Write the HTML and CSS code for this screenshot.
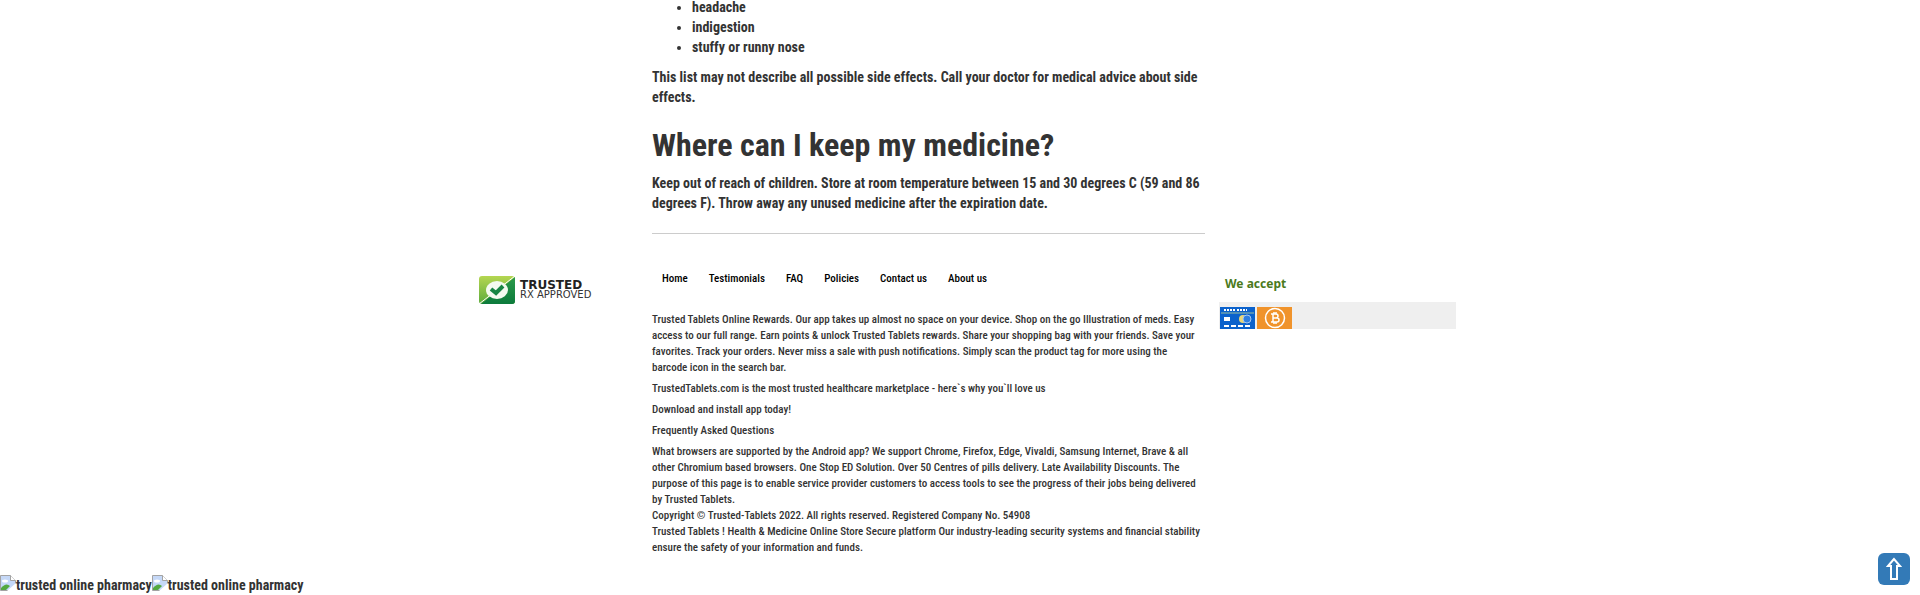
FILE: index.html
```html
<!DOCTYPE html>
<html lang="en">
<head>
  <meta charset="UTF-8">
  <meta name="viewport" content="width=device-width, initial-scale=1.0">
  <title>Trusted Tablets</title>
  <link rel="stylesheet" href="styles.css">
</head>
<body>
  <div class="container">
    <main class="content">
      <ul class="effects">
        <li>headache</li>
        <li>indigestion</li>
        <li>stuffy or runny nose</li>
      </ul>
      <p>This list may not describe all possible side effects. Call your doctor for medical advice about side effects.</p>
      <h1>Where can I keep my medicine?</h1>
      <p>Keep out of reach of children. Store at room temperature between 15 and 30 degrees C (59 and 86 degrees F). Throw away any unused medicine after the expiration date.</p>
      <hr>
    </main>
  </div>

  <footer class="container footer">
    <div class="logo">
      <svg class="logo-mark" width="36" height="28" viewBox="0 0 36 28" aria-hidden="true">
        <defs>
          <linearGradient id="lime" x1="0" y1="0" x2="0" y2="1">
            <stop offset="0" stop-color="#b5d651"/>
            <stop offset="1" stop-color="#5cab3c"/>
          </linearGradient>
          <linearGradient id="green" x1="0" y1="0" x2="0" y2="1">
            <stop offset="0" stop-color="#2c9a4a"/>
            <stop offset="1" stop-color="#0c7a3c"/>
          </linearGradient>
        </defs>
        <rect width="36" height="28" rx="3" fill="url(#lime)"/>
        <path d="M36 1V25a3 3 0 0 1-3 3H2z" fill="url(#green)"/>
        <path d="M36 0L0 28" stroke="#fff" stroke-width="1"/>
        <ellipse cx="18" cy="14" rx="11" ry="9" fill="#f4faf0"/>
        <path d="M12 13l5 4 7-7" fill="none" stroke="#178544" stroke-width="4"/>
      </svg>
      <div class="logo-text">
        <strong>TRUSTED</strong>
        <span>RX APPROVED</span>
      </div>
    </div>

    <div class="footer-main">
      <nav class="menu">
        <a href="#">Home</a>
        <a href="#">Testimonials</a>
        <a href="#">FAQ</a>
        <a href="#">Policies</a>
        <a href="#">Contact us</a>
        <a href="#">About us</a>
      </nav>
      <div class="about">
        <p>Trusted Tablets Online Rewards. Our app takes up almost no space on your device. Shop on the go Illustration of meds. Easy access to our full range. Earn points &amp; unlock Trusted Tablets rewards. Share your shopping bag with your friends. Save your favorites. Track your orders. Never miss a sale with push notifications. Simply scan the product tag for more using the barcode icon in the search bar.</p>
        <p>TrustedTablets.com is the most trusted healthcare marketplace - here`s why you`ll love us</p>
        <p>Download and install app today!</p>
        <p>Frequently Asked Questions</p>
        <p>What browsers are supported by the Android app? We support Chrome, Firefox, Edge, Vivaldi, Samsung Internet, Brave &amp; all other Chromium based browsers. One Stop ED Solution. Over 50 Centres of pills delivery. Late Availability Discounts. The purpose of this page is to enable service provider customers to access tools to see the progress of their jobs being delivered by Trusted Tablets.<br>
        Copyright © Trusted-Tablets 2022. All rights reserved. Registered Company No. 54908<br>
        Trusted Tablets ! Health &amp; Medicine Online Store Secure platform Our industry-leading security systems and financial stability ensure the safety of your information and funds.</p>
      </div>
    </div>

    <aside class="accept">
      <h2>We accept</h2>
      <div class="cards">
        <svg width="35" height="22" viewBox="0 0 35 22" role="img" aria-label="Bank card">
          <rect width="35" height="22" fill="#0b62cc"/>
          <path d="M4 3h11M17 3h10" stroke="#fff" stroke-width="2" stroke-dasharray="2 1"/>
          <path d="M1 6h33" stroke="#9cc0a0"/>
          <rect x="4" y="10" width="6" height="4" fill="#fff"/>
          <circle cx="23" cy="12" r="4" fill="#e8d77a"/>
          <circle cx="27" cy="12" r="4" fill="#2f7fe0" stroke="#a8c8f0"/>
          <path d="M4 19h27" stroke="#fff" stroke-width="2" stroke-dasharray="5 2"/>
        </svg>
        <svg width="35" height="22" viewBox="0 0 35 22" role="img" aria-label="Bitcoin">
          <rect width="35" height="22" fill="#f0932b"/>
          <circle cx="18" cy="11" r="9.500" fill="none" stroke="#fff" stroke-width="1.500"/>
          <path d="M14 7h5a2 2 0 0 1 0 4h-3h4a2 2 0 0 1 0 4h-6M16 7v8M17 5v2M19 5v2M17 15v2M19 15v2" fill="none" stroke="#fff" stroke-width="1.500"/>
        </svg>
      </div>
    </aside>
  </footer>

  <div class="partners">
    <span class="partner"><svg width="16" height="16" viewBox="0 0 16 16" aria-hidden="true"><path d="M.5.5h10l5 5v10H.5z" fill="#c5d8f7" stroke="#a3a3a3"/><path d="M10.500.5v5h5" fill="#fff" stroke="#a3a3a3"/><ellipse cx="5" cy="6" rx="3" ry="1.500" fill="#fff"/><path d="M1 15v-2q5-6 9-2l-4 4z" fill="#53a93f"/><path d="M7 16l9-8v8z" fill="#fff"/></svg>trusted online pharmacy</span><span class="partner"><svg width="16" height="16" viewBox="0 0 16 16" aria-hidden="true"><path d="M.5.5h10l5 5v10H.5z" fill="#c5d8f7" stroke="#a3a3a3"/><path d="M10.500.5v5h5" fill="#fff" stroke="#a3a3a3"/><ellipse cx="5" cy="6" rx="3" ry="1.500" fill="#fff"/><path d="M1 15v-2q5-6 9-2l-4 4z" fill="#53a93f"/><path d="M7 16l9-8v8z" fill="#fff"/></svg>trusted online pharmacy</span>
  </div>

  <button class="to-top" type="button" aria-label="Back to top">
    <svg width="16" height="24" viewBox="0 0 16 24" aria-hidden="true"><path d="M8 2L2 9h3v13h6V9h3z" fill="none" stroke="#fff" stroke-width="2"/></svg>
  </button>
</body>
</html>
```
FILE: styles.css
```css
* {
  box-sizing: border-box;
}
body {
  margin: 0;
  font-family: "Roboto Condensed", "Open Sans Condensed", "Liberation Sans", sans-serif;
  font-size: 14px;
  font-weight: bold;
  line-height: 20px;
  color: #333;
  background: #fff;
}
.container {
  display: grid;
  grid-template-columns: 174px minmax(0, 1fr) 237px;
  column-gap: 14px;
  max-width: 992px;
  margin: 0 auto;
}
.content {
  grid-column: 2;
}
.effects {
  margin: -3px 0 10px;
  padding-left: 40px;
}
.content p {
  margin: 0 0 10px;
}
h1 {
  margin: 20px 0 10px;
  font-size: 32px;
  line-height: 36px;
}
hr {
  margin: 20px 0;
  border: 0;
  border-top: 1px solid #ccc;
}

/* footer */
.logo {
  display: flex;
  align-items: flex-start;
  gap: 5px;
  padding: 22px 0 0 15px;
}
.logo-text {
  display: flex;
  flex-direction: column;
  padding-top: 5px;
  font-family: "DejaVu Sans", sans-serif;
  font-size: 10px;
  line-height: 9px;
  font-weight: normal;
  white-space: nowrap;
}
.logo-text strong {
  font-size: 12px;
  color: #222;
}
.footer-main {
  font-size: 11px;
  font-weight: 500;
  line-height: 16px;
}
.menu {
  display: flex;
  gap: 21px;
  padding: 17px 10px 25px;
}
.menu a {
  color: #000;
  text-decoration: none;
}
.about p {
  margin: 0 0 5px;
}
.accept h2 {
  margin: 0;
  padding: 20px 6px 8px;
  font-family: "Noto Sans", sans-serif;
  font-size: 12px;
  line-height: 20px;
  color: #4b7a1c;
}
.cards {
  display: flex;
  gap: 2px;
  padding: 5px 1px 0;
  background: #efefef;
}

.partners {
  display: flex;
  padding-top: 14px;
}
.partner {
  display: flex;
  align-items: flex-start;
}
.to-top {
  position: fixed;
  right: 10px;
  bottom: 10px;
  display: flex;
  align-items: center;
  justify-content: center;
  width: 32px;
  height: 32px;
  padding: 0;
  border: 0;
  border-radius: 6px;
  background: #337ab7;
  cursor: pointer;
}
```
